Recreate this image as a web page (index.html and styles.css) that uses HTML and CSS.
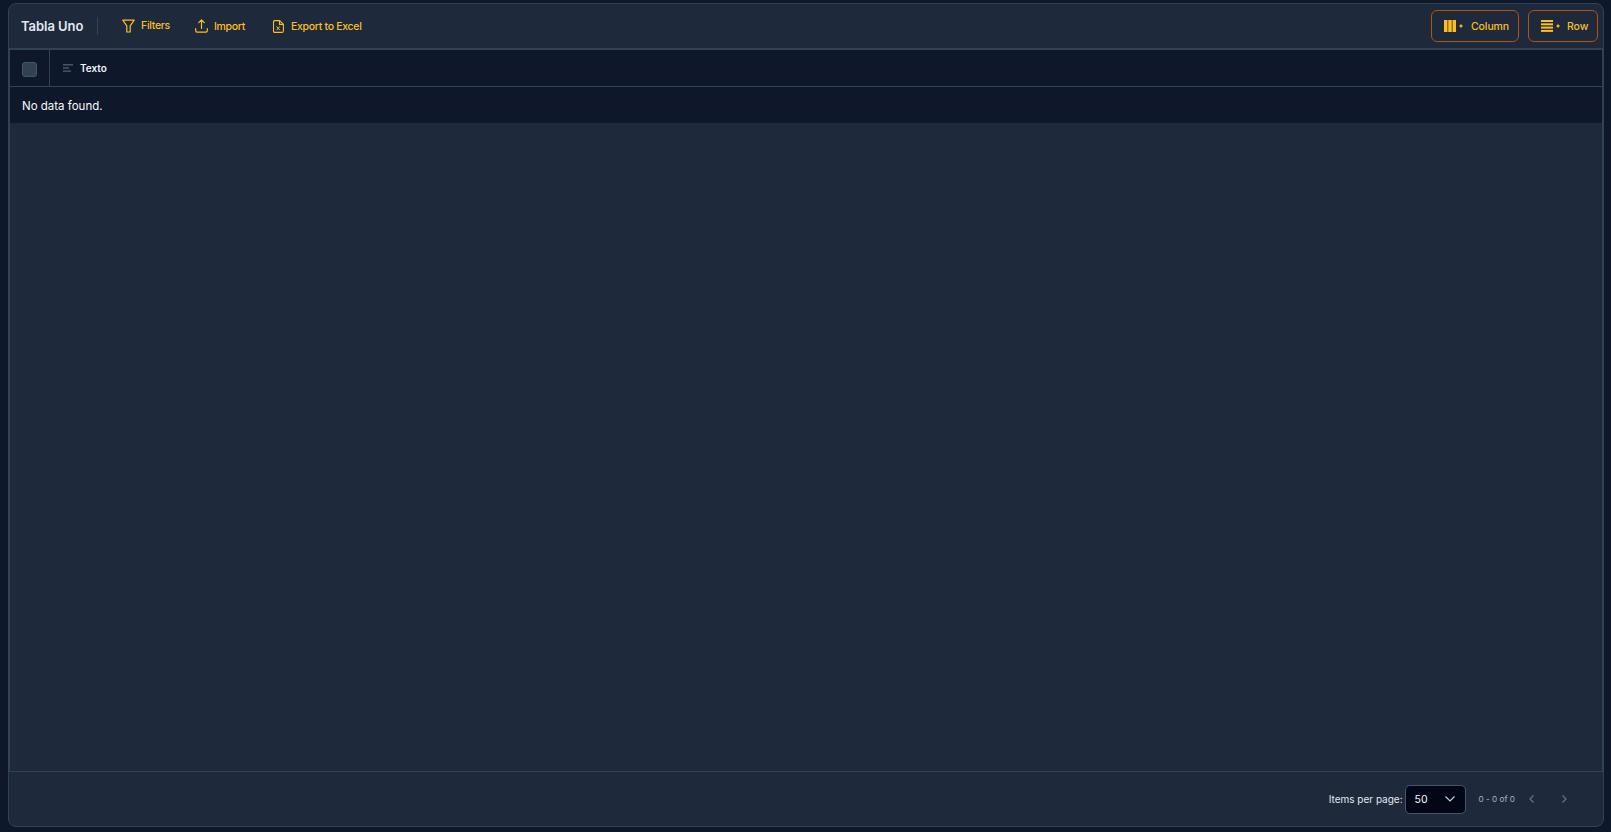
FILE: index.html
```html
<!DOCTYPE html>
<html lang="en">

<head>
    <meta charset="UTF-8">
    <title>Tabla Uno</title>
    <link rel="stylesheet" href="styles.css">
</head>

<body>
    <div class="card">
        <div class="toolbar">
            <div class="title">Tabla Uno</div>
            <div class="title-sep"></div>
            <button class="tool-btn filters-btn">
                <svg width="13" height="14" viewBox="0 0 13 14" fill="none" stroke="currentColor" stroke-width="1.2" stroke-linejoin="round"><path d="M.8 1.200h11.400L8.200 6.800v6.200H4.800V6.800z"/></svg>
                <span>Filters</span>
            </button>
            <button class="tool-btn import-btn">
                <svg width="13" height="14" viewBox="0 0 13 14" fill="none" stroke="currentColor" stroke-width="1.2" stroke-linecap="round" stroke-linejoin="round"><path d="M6.500 9.500V1M3.700 3.600L6.500.9l2.800 2.700M.7 9.500v2.300c0 .8.500 1.300 1.300 1.300h9c.8 0 1.300-.5 1.300-1.300V9.500"/></svg>
                <span>Import</span>
            </button>
            <button class="tool-btn export-btn">
                <svg width="11" height="13" viewBox="0 0 11 13" fill="none" stroke="currentColor" stroke-width="1.100" stroke-linejoin="round"><path d="M1.800.6h4.900l3.700 3.700v6.600c0 1-.6 1.500-1.500 1.500H1.800c-.9 0-1.300-.5-1.300-1.500V2.100C.5 1.100.9.6 1.800.6z"/><path d="M6.500.8v3.600h3.800"/><path d="M3.600 6.400l3.200 3.800M6.800 6.400l-3.200 3.800" stroke-width="1"/></svg>
                <span>Export to Excel</span>
            </button>
            <div class="spacer"></div>
            <button class="add-btn column-btn">
                <svg width="22" height="12" viewBox="0 0 22 12" fill="currentColor"><rect width="3.500" height="12"/><rect x="4.250" width="3.500" height="12"/><rect x="8.500" width="3.500" height="12"/><path d="M17 3.800l.8 1.400 1.400.8-1.400.8-.8 1.400-.8-1.400-1.400-.8 1.400-.8z"/></svg>
                <span>Column</span>
            </button>
            <button class="add-btn row-btn">
                <svg width="22" height="12" viewBox="0 0 22 12" fill="currentColor"><rect width="12" height="2"/><rect y="3.300" width="12" height="2"/><rect y="6.600" width="12" height="2"/><rect y="9.900" width="12" height="2"/><path d="M17 3.800l.8 1.400 1.400.8-1.400.8-.8 1.400-.8-1.400-1.400-.8 1.400-.8z"/></svg>
                <span>Row</span>
            </button>
        </div>

        <div class="table-wrap">
            <div class="table-head">
                <div class="check-cell"><div class="checkbox"></div></div>
                <div class="head-cell">
                    <svg width="10" height="8" viewBox="0 0 10 8" fill="#475569"><rect width="10" height="1.500"/><rect y="3.200" width="6" height="1.500"/><rect y="6.400" width="8" height="1.500"/></svg>
                    <span>Texto</span>
                </div>
            </div>
            <div class="no-data">No data found.</div>
        </div>

        <div class="footer">
            <span class="per-page">Items per page:</span>
            <div class="page-select">
                <span>50</span>
                <svg width="10" height="6" viewBox="0 0 10 6" fill="none" stroke="#cbd5e1" stroke-width="1.100"><path d="M.5.5L5 5 9.500.5"/></svg>
            </div>
            <span class="range">0 - 0 of 0</span>
            <button class="page-btn">
                <svg width="5" height="8" viewBox="0 0 5 8" fill="none" stroke="#64748b" stroke-width="1.200"><path d="M4.500.5L1 4l3.500 3.500"/></svg>
            </button>
            <button class="page-btn">
                <svg width="5" height="8" viewBox="0 0 5 8" fill="none" stroke="#64748b" stroke-width="1.200"><path d="M.5.5L4 4 .5 7.500"/></svg>
            </button>
        </div>
    </div>
</body>

</html>
```

FILE: styles.css
```css
html, body {
    height: 100%;
}

body {
    background: #0f172a;
    color: #f1f5f9;
    font-family: Inter, 'Noto Sans', sans-serif;
    margin: 0;
    padding: 3px 7px 5px 8px;
    box-sizing: border-box;
    overflow: hidden;
}

button {
    background: none;
    border: none;
    font-family: inherit;
    padding: 0;
    cursor: pointer;
}

svg {
    flex: none;
}

.card {
    height: 100%;
    box-sizing: border-box;
    display: flex;
    flex-direction: column;
    background: #1e293b;
    border: 1px solid #334155;
    border-radius: 8px;
}

.toolbar {
    height: 46px;
    flex: none;
    box-sizing: border-box;
    display: flex;
    align-items: center;
    padding: 0 5px 0 12px;
    border-bottom: 2px solid #334155;
}

.title {
    width: 61px;
    font-size: 13px;
    font-weight: 600;
    letter-spacing: -0.05px;
    white-space: nowrap;
    color: #e2e8f0;
}

.title-sep {
    width: 1px;
    height: 18px;
    background: #334155;
    margin: 0 24px 0 15px;
}

.tool-btn {
    display: flex;
    align-items: center;
    gap: 6px;
    color: #fbbf24;
    font-size: 10.500px;
    font-weight: 500;
    letter-spacing: -0.3px;
    margin-right: 28px;
}

.filters-btn {
    margin-right: 25px;
}

.export-btn {
    gap: 7px;
}

.filters-btn span {
    margin-bottom: 2px;
}

.spacer {
    flex: 1;
}

.add-btn {
    height: 32px;
    box-sizing: border-box;
    display: flex;
    align-items: center;
    gap: 5px;
    padding: 0 9px 0 12px;
    margin-left: 9px;
    color: #fbbf24;
    font-size: 10.500px;
    font-weight: 500;
    letter-spacing: -0.1px;
    border: 1px solid #b45309;
    border-radius: 6px;
}

.column-btn {
    width: 88px;
}

.row-btn {
    width: 70px;
    gap: 4px;
}

.table-wrap {
    flex: 1;
    border-right: 1px solid #334155;
    border-left: 1px solid #334155;
}

.table-head {
    height: 37px;
    box-sizing: border-box;
    display: flex;
    background: #0f172a;
    border-bottom: 1px solid #334155;
}

.check-cell {
    width: 40px;
    flex: none;
    box-sizing: border-box;
    display: flex;
    align-items: center;
    justify-content: center;
    border-right: 1px solid #334155;
}

.checkbox {
    width: 13px;
    height: 13px;
    margin-top: 3px;
    background: #334155;
    border: 1px solid #475569;
    border-radius: 3px;
}

.head-cell {
    display: flex;
    align-items: center;
    gap: 7px;
    padding-left: 13px;
    font-size: 10px;
    font-weight: 600;
    color: #f1f5f9;
}

.no-data {
    height: 36px;
    box-sizing: border-box;
    display: flex;
    align-items: center;
    padding: 2px 0 0 12px;
    background: #0f172a;
    font-size: 11.500px;
    color: #f8fafc;
}

.footer {
    height: 55px;
    flex: none;
    box-sizing: border-box;
    display: flex;
    align-items: center;
    justify-content: flex-end;
    padding-right: 22px;
    border-top: 1px solid #334155;
}

.per-page {
    font-size: 10px;
    color: #e2e8f0;
    margin-right: 2px;
}

.page-select {
    width: 61px;
    height: 29px;
    box-sizing: border-box;
    display: flex;
    align-items: center;
    justify-content: space-between;
    padding: 0 10px 0 9px;
    background: #020617;
    border: 1px solid #475569;
    border-radius: 5px;
    font-size: 10.500px;
    color: #f8fafc;
}

.range {
    font-size: 8.200px;
    color: #a5b4cb;
    margin: 0 0 0 13px;
}

.page-btn {
    width: 33px;
    height: 28px;
    display: flex;
    align-items: center;
    justify-content: center;
}
```
